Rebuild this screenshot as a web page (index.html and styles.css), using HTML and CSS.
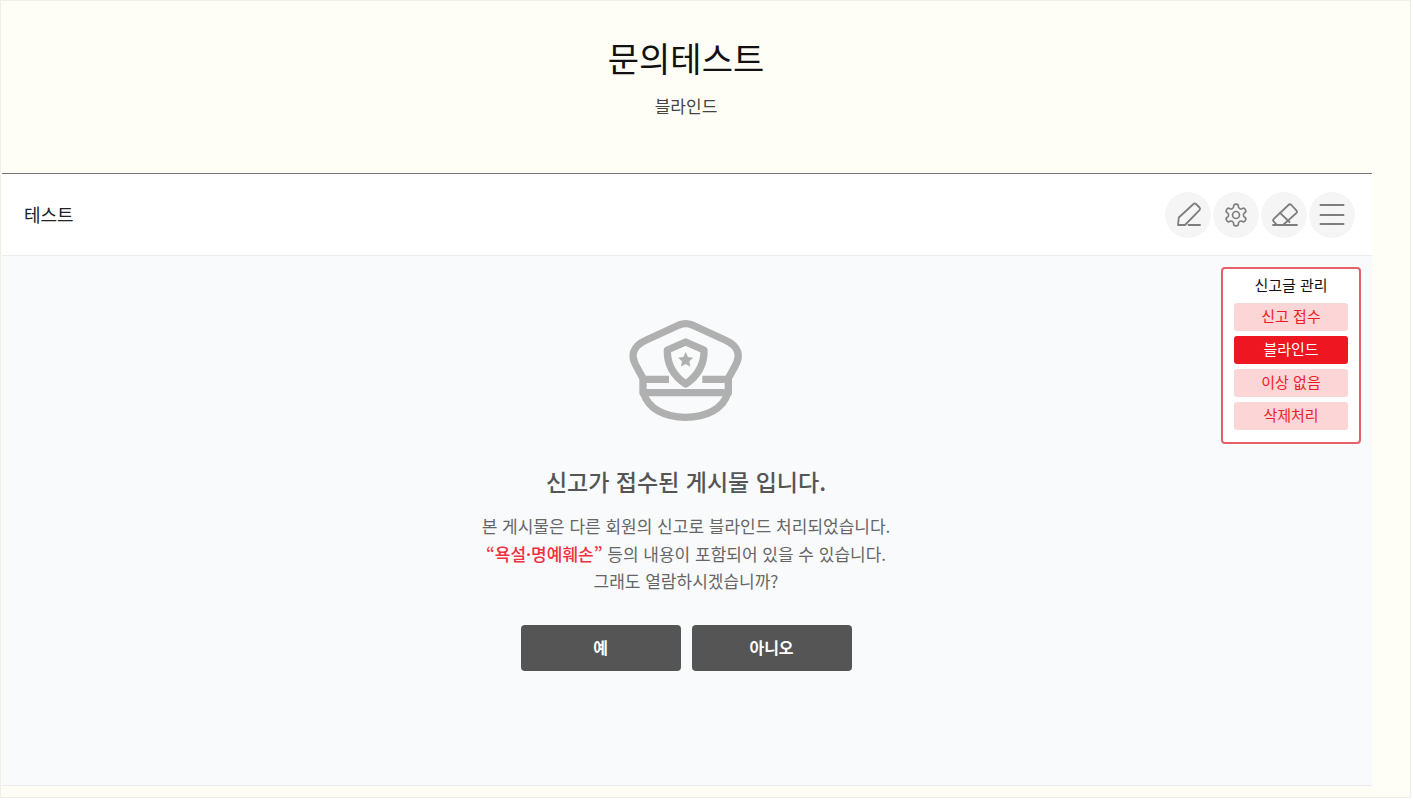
FILE: index.html
```html
<!DOCTYPE html>
<html lang="ko">
<head>
  <meta charset="UTF-8">
  <meta name="viewport" content="width=device-width, initial-scale=1.0">
  <title>문의테스트</title>
  <link rel="stylesheet" href="styles.css">
</head>
<body>

  <div class="page">
    <div class="board">
      <!-- 게시판 제목 -->
      <header class="board-head">
        <h1>문의테스트</h1>
        <p>블라인드</p>
      </header>

      <!-- 글 제목과 도구 -->
      <div class="post-bar">
        <span class="post-title">테스트</span>
        <div class="tools">
          <button class="tool" aria-label="글쓰기">
            <svg viewBox="0 0 46 46"><path d="M13 33l.8-7.500L28.500 12a1.800 1.800 0 0 1 2.500 0l3.500 3.500a1.800 1.800 0 0 1 0 2.500L20 33z"/><path d="M23.500 33H35"/></svg>
          </button>
          <button class="tool" aria-label="설정">
            <svg class="gear" viewBox="0 0 24 24"><path d="M12.220 2h-.44a2 2 0 0 0-2 2v.18a2 2 0 0 1-1 1.730l-.43.25a2 2 0 0 1-2 0l-.15-.08a2 2 0 0 0-2.730.73l-.22.38a2 2 0 0 0 .73 2.730l.15.1a2 2 0 0 1 1 1.720v.51a2 2 0 0 1-1 1.740l-.15.09a2 2 0 0 0-.73 2.730l.22.38a2 2 0 0 0 2.730.73l.15-.08a2 2 0 0 1 2 0l.43.25a2 2 0 0 1 1 1.730V20a2 2 0 0 0 2 2h.44a2 2 0 0 0 2-2v-.18a2 2 0 0 1 1-1.730l.43-.25a2 2 0 0 1 2 0l.15.08a2 2 0 0 0 2.730-.73l.22-.39a2 2 0 0 0-.73-2.730l-.15-.08a2 2 0 0 1-1-1.740v-.5a2 2 0 0 1 1-1.740l.15-.09a2 2 0 0 0 .73-2.730l-.22-.38a2 2 0 0 0-2.730-.73l-.15.08a2 2 0 0 1-2 0l-.43-.25a2 2 0 0 1-1-1.730V4a2 2 0 0 0-2-2z"/><circle cx="12" cy="12" r="3.200"/></svg>
          </button>
          <button class="tool" aria-label="지우기">
            <svg viewBox="0 0 46 46"><path d="M12.800 26.800L27.500 13a2 2 0 0 1 2.800 0l5 5.300a2 2 0 0 1 0 2.800L22 33h-6l-3.200-3.400a2 2 0 0 1 0-2.800z"/><path d="M19 20.800L28.500 30"/><path d="M12 33h24"/></svg>
          </button>
          <button class="tool" aria-label="메뉴">
            <svg class="menu" viewBox="0 0 46 46"><path d="M11.500 13h23M11.500 23h23M11.500 32h23"/></svg>
          </button>
        </div>
      </div>

      <!-- 신고 안내 -->
      <main class="notice">
        <svg class="cap" viewBox="0 0 405 360">
          <path d="M72 205C54 172 36 148 44 125C50 108 64 98 82 90L180 45Q200 37 220 45L318 90C336 98 350 108 356 125C364 148 346 172 328 205"/>
          <path d="M150 208H72V248H328V208H250"/>
          <path d="M74 250C88 298 140 322 200 322S312 298 326 250"/>
          <path d="M145 120L200 96L255 120C256 160 240 195 200 222C160 195 144 160 145 120z"/>
          <path class="star" d="M200 126l7 15 16 2-12 11 3 16-14-8-14 8 3-16-12-11 16-2z"/>
        </svg>
        <h2>신고가 접수된 게시물 입니다.</h2>
        <p class="notice-text">
          본 게시물은 다른 회원의 신고로 블라인드 처리되었습니다.<br>
          <em>“욕설·명예훼손”</em> 등의 내용이 포함되어 있을 수 있습니다.<br>
          그래도 열람하시겠습니까?
        </p>
        <div class="answers">
          <button class="answer">예</button>
          <button class="answer">아니오</button>
        </div>
      </main>

      <!-- 신고글 관리 -->
      <aside class="report-box">
        <strong>신고글 관리</strong>
        <button class="report-btn">신고 접수</button>
        <button class="report-btn active">블라인드</button>
        <button class="report-btn">이상 없음</button>
        <button class="report-btn">삭제처리</button>
      </aside>
    </div>
  </div>

</body>
</html>
```

FILE: styles.css
```css
* {
  box-sizing: border-box;
}

body {
  margin: 0;
  background-color: #fff;
  font-family: "Noto Sans CJK KR", "Noto Sans", sans-serif;
  color: #333;
}

button {
  font-family: inherit;
  cursor: pointer;
}

.page {
  width: 1411px;
  height: 798px;
  padding-left: 1px;
  background-color: #fffef6;
  border: 1px solid #efefea;
  overflow: hidden;
}

.board {
  position: relative;
  width: 1370px;
}

.board-head {
  height: 173px;
  padding: 32px 2px 0 0;
  text-align: center;
  border-bottom: 1px solid #777;
}

.board-head h1 {
  margin: 0;
  font-size: 34px;
  line-height: 50px;
  font-weight: 400;
  color: #111;
}

.board-head p {
  margin: 11px 0 0;
  font-size: 17px;
  line-height: 24px;
  color: #444;
}

.post-bar {
  display: flex;
  justify-content: space-between;
  align-items: center;
  height: 82px;
  padding: 0 17px 0 22px;
  background-color: #fff;
  border-bottom: 1px solid #e9ebef;
}

.post-title {
  padding-bottom: 2px;
  font-size: 18px;
  color: #222;
}

.tools {
  display: flex;
  gap: 2px;
}

.tool {
  display: flex;
  justify-content: center;
  align-items: center;
  width: 46px;
  height: 46px;
  padding: 0;
  background-color: #f5f5f5;
  border: 0;
  border-radius: 50%;
}

.tool svg {
  width: 46px;
  height: 46px;
  fill: none;
  stroke: #7d7d7d;
  stroke-width: 1.800;
  stroke-linejoin: round;
  stroke-linecap: round;
}

.tool svg.gear {
  width: 26px;
  height: 26px;
  stroke-width: 1.500;
}

.tool svg.menu {
  stroke-width: 2;
}

.notice {
  display: flex;
  flex-direction: column;
  align-items: center;
  height: 530px;
  padding: 54px 2px 0 0;
  background-color: #f9fafc;
  border-bottom: 1px solid #e9ebee;
}

.cap {
  width: 135px;
  height: 120px;
  fill: none;
  stroke: #b0b0b0;
  stroke-width: 22;
  stroke-linejoin: round;
}

.cap .star {
  fill: #b0b0b0;
  stroke: none;
}

.notice h2 {
  margin: 34px 0 0;
  font-size: 23px;
  line-height: 34px;
  font-weight: 500;
  color: #555;
}

.notice-text {
  margin: 14px 0 0;
  font-size: 17px;
  line-height: 27.500px;
  text-align: center;
  color: #666;
}

.notice-text em {
  font-style: normal;
  font-weight: 500;
  color: #f0303c;
}

.answers {
  display: flex;
  gap: 11px;
  margin-top: 30px;
}

.answer {
  width: 160px;
  height: 46px;
  padding: 0 0 2px;
  background-color: #555;
  border: 0;
  border-radius: 4px;
  color: #fff;
  font-size: 16px;
  font-weight: 700;
}

.report-box {
  position: absolute;
  top: 266px;
  left: 1219px;
  display: flex;
  flex-direction: column;
  align-items: center;
  gap: 5px;
  width: 140px;
  height: 177px;
  padding-top: 4px;
  background-color: #fff;
  border: 2px solid #e5606a;
  border-radius: 4px;
}

.report-box strong {
  font-size: 15px;
  line-height: 24px;
  font-weight: 400;
  color: #111;
  margin-bottom: 1px;
}

.report-btn {
  width: 114px;
  height: 28px;
  padding: 0 0 3px;
  background-color: #fcd5d7;
  border: 0;
  border-radius: 3px;
  color: #ee1c25;
  font-size: 15px;
}

.report-btn.active {
  background-color: #ee1620;
  color: #fff;
}
```
